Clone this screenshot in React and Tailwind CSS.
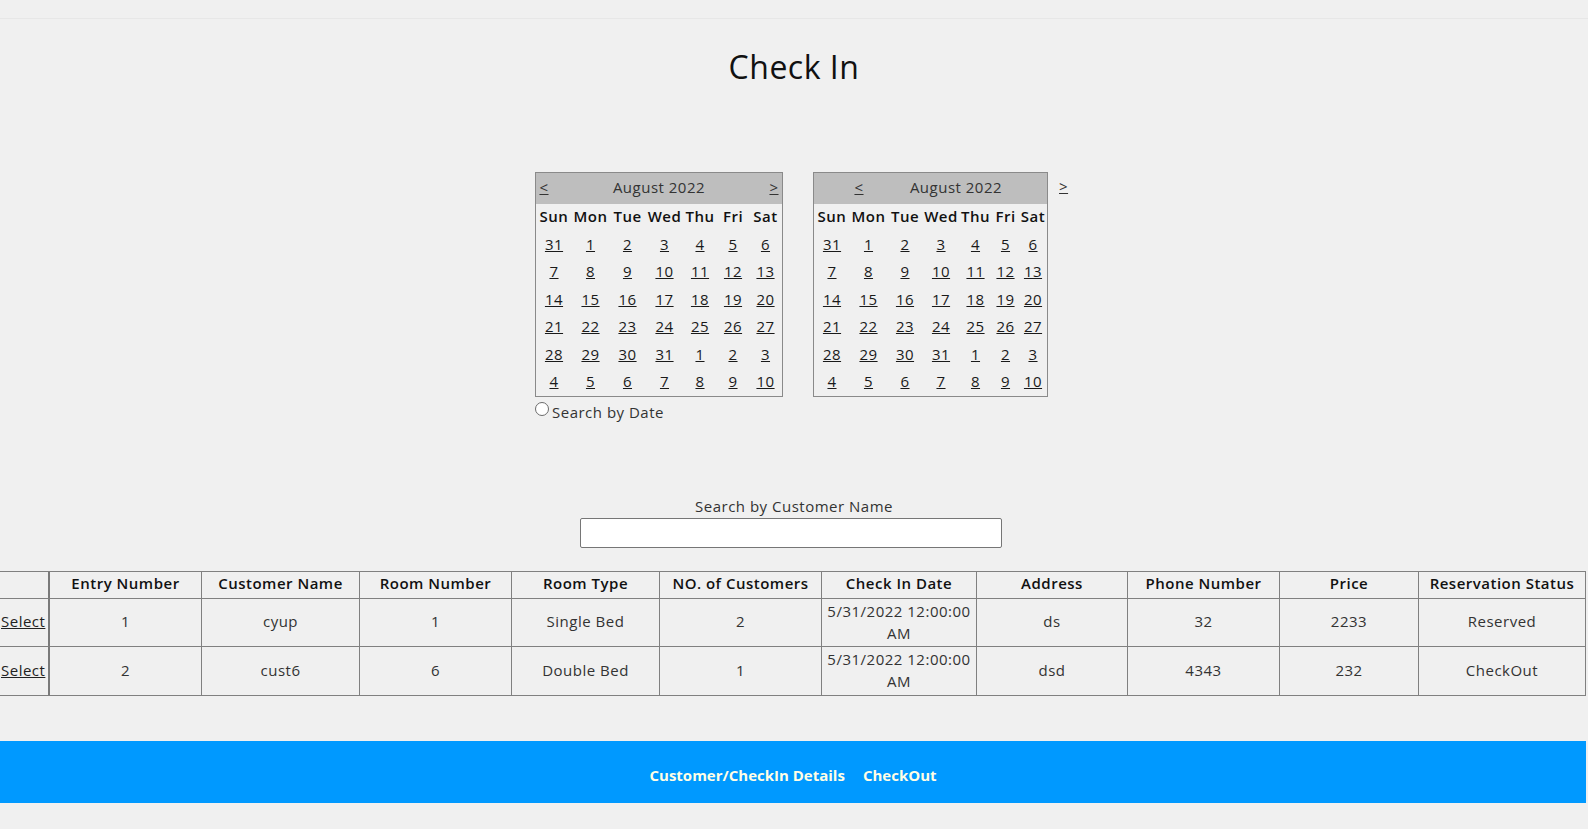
import React from "react";

const rows = [
  [31, 1, 2, 3, 4, 5, 6],
  [7, 8, 9, 10, 11, 12, 13],
  [14, 15, 16, 17, 18, 19, 20],
  [21, 22, 23, 24, 25, 26, 27],
  [28, 29, 30, 31, 1, 2, 3],
  [4, 5, 6, 7, 8, 9, 10],
];
const dayNames = ["Sun", "Mon", "Tue", "Wed", "Thu", "Fri", "Sat"];

function Calendar({ widths, variant }) {
  const total = widths.reduce((a, b) => a + b, 0);
  return (
    <div className="border border-[#8a8a8a] shrink-0" style={{ width: total + 2 }}>
      {variant === 1 ? (
        <div className="flex h-[31px] items-center bg-[#bebebe] pb-[2px] text-[#333]">
          <span className="w-[16px] text-center underline">&lt;</span>
          <span className="flex-1 text-center">August 2022</span>
          <span className="w-[16px] text-center underline">&gt;</span>
        </div>
      ) : (
        <div className="flex h-[31px] items-center bg-[#bebebe] pb-[2px] text-[#333]">
          <span className="w-[90px] text-center underline">&lt;</span>
          <span className="w-[104px] text-center">August 2022</span>
        </div>
      )}
      <div className="flex h-[27px] items-center pb-[2px] font-semibold text-[#111]">
        {dayNames.map((d, i) => (
          <span key={d} className="text-center" style={{ width: widths[i] }}>
            {d}
          </span>
        ))}
      </div>
      {rows.map((r, ri) => (
        <div key={ri} className="flex h-[27.5px] items-center pb-[2px] text-[#1a1a1a]">
          {r.map((n, i) => (
            <span key={i} className="text-center" style={{ width: widths[i] }}>
              <span className="underline">{n}</span>
            </span>
          ))}
        </div>
      ))}
    </div>
  );
}

const cols = "grid-cols-[50px_152px_158px_152px_148px_162px_155px_151px_152px_139px_167px]";
const headers = [
  "",
  "Entry Number",
  "Customer Name",
  "Room Number",
  "Room Type",
  "NO. of Customers",
  "Check In Date",
  "Address",
  "Phone Number",
  "Price",
  "Reservation Status",
];
const data = [
  ["1", "cyup", "1", "Single Bed", "2", "ds", "32", "2233", "Reserved"],
  ["2", "cust6", "6", "Double Bed", "1", "dsd", "4343", "232", "CheckOut"],
];

function Cell({ children, first, className = "" }) {
  return (
    <div
      className={
        "flex items-center border-b border-[#808080] " +
        (first ? "border-r-2 border-r-[#7a7a7a] " : "border-r justify-center text-center ") +
        className
      }
    >
      {children}
    </div>
  );
}

export default function App() {
  return (
    <div className="min-h-screen bg-[#f0f0f0] font-['Open_Sans',sans-serif] text-[15px] tracking-[0.5px] text-[#222]">
      <div className="h-[19px] border-b border-[#e7e7e7]" />
      <h1 className="mt-[31px] h-[33px] text-center text-[32px] leading-[33px] text-[#111]">Check In</h1>

      <div className="mx-auto mt-[89px] w-[518px]">
        <div className="flex items-start">
          <Calendar variant={1} widths={[36, 37, 37, 37, 34, 32, 33]} />
          <div className="ml-[30px]">
            <Calendar variant={2} widths={[36, 37, 36, 36, 33, 27, 28]} />
          </div>
          <span className="ml-[11px] mt-[4px] leading-[20px] text-[#333] underline">&gt;</span>
        </div>
        <div className="mt-[5px] flex items-start">
          <span className="h-[14px] w-[14px] shrink-0 rounded-full border border-[#6b6b6b] bg-white" />
          <span className="ml-[3px] leading-[20px] text-[#333]">Search by Date</span>
        </div>
      </div>

      <div className="mt-[74px] text-center leading-[20px] text-[#333]">Search by Customer Name</div>
      <div className="mt-[2px] flex justify-center pr-[6px]">
        <div className="h-[30px] w-[422px] rounded-[2px] border border-[#767676] bg-white" />
      </div>

      <div className={"mt-[23px] grid w-[1586px] border-t border-[#808080] " + cols}>
        {headers.map((h, i) => (
          <Cell key={"h" + i} first={i === 0} className="h-[27px] pb-[3px] font-semibold text-[#111]">
            {h}
          </Cell>
        ))}
        {data.map((r, ri) => (
          <React.Fragment key={ri}>
            <Cell first className={(ri === 0 ? "h-[48px]" : "h-[49px]") + " pb-[2px] pl-[1px] text-[#222]"}>
              <span className="underline">Select</span>
            </Cell>
            {r.slice(0, 5).map((v, i) => (
              <Cell key={i} className="pb-[2px] text-[#333]">{v}</Cell>
            ))}
            <Cell className="pb-[2px] leading-[22px] text-[#333]">
              <span>
                5/31/2022 12:00:00
                <br />
                AM
              </span>
            </Cell>
            {r.slice(5).map((v, i) => (
              <Cell key={"b" + i} className="pb-[2px] text-[#333]">{v}</Cell>
            ))}
          </React.Fragment>
        ))}
      </div>

      <div className="mt-[45px] flex h-[62px] w-[1586px] items-center justify-center gap-[18px] bg-[#0099ff] pt-[6px] font-bold tracking-normal text-[#fffee6]">
        <span>Customer/CheckIn Details</span>
        <span>CheckOut</span>
      </div>
    </div>
  );
}
